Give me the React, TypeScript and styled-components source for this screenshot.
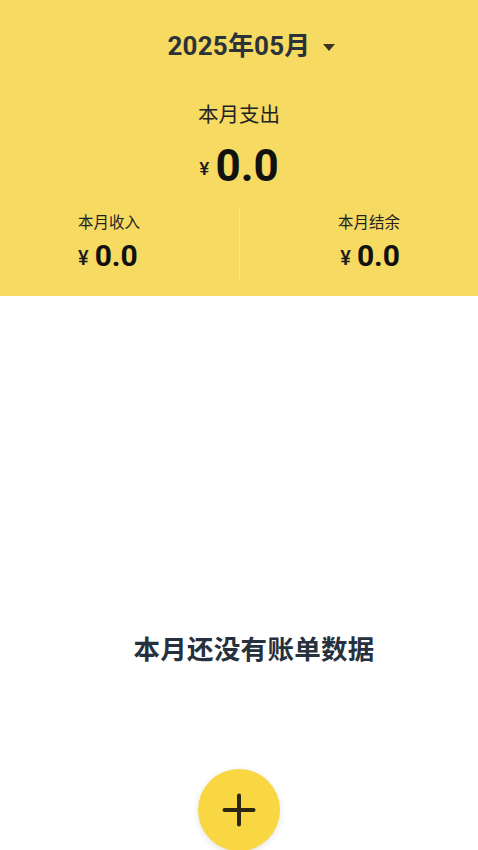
import React from 'react';
import styled, { createGlobalStyle } from 'styled-components';

const GlobalStyle = createGlobalStyle`
  html, body {
    margin: 0;
    padding: 0;
    background: #ffffff;
  }
  body {
    font-family: Roboto, 'Noto Sans CJK SC', sans-serif;
  }
`;

const Page = styled.div`
  width: 478px;
  height: 850px;
  overflow: hidden;
  display: flex;
  flex-direction: column;
  background: #ffffff;
`;

const Header = styled.header`
  background: #f6da62;
  padding: 28px 0 17px;
  display: flex;
  flex-direction: column;
  align-items: center;
`;

const MonthPicker = styled.div`
  position: relative;
  height: 36px;
  line-height: 36px;
  font-size: 26px;
  font-weight: 700;
  color: #2c3238;
  letter-spacing: 0.2px;
`;

const Caret = styled.span`
  position: absolute;
  left: calc(100% + 12px);
  top: 16px;
  width: 0;
  height: 0;
  border-left: 6px solid transparent;
  border-right: 6px solid transparent;
  border-top: 7px solid #3a3520;
`;

const SpendLabel = styled.div`
  margin-top: 38px;
  height: 26px;
  line-height: 26px;
  font-size: 20.5px;
  color: #222222;
`;

const Amount = styled.div<{ $size: number; $yen: number; $lift: number }>`
  display: flex;
  align-items: baseline;
  height: ${p => Math.round(p.$size * 1.25)}px;
  line-height: ${p => Math.round(p.$size * 1.25)}px;
  color: #111111;

  .yen {
    font-size: ${p => p.$yen}px;
    font-weight: 500;
    margin-right: ${p => Math.round(p.$yen * 0.3)}px;
    position: relative;
    top: -${p => p.$lift}px;
    color: #1c1c1c;
  }
  .value {
    font-size: ${p => p.$size}px;
    font-weight: 700;
  }
`;

const BigAmount = styled(Amount)`
  margin-top: 11px;
`;

const Summary = styled.div`
  align-self: stretch;
  margin-top: 15px;
  display: grid;
  grid-template-columns: 1fr 1px 1fr;
  padding: 0 78px;
`;

const Divider = styled.div`
  background: rgba(255, 255, 255, 0.35);
`;

const SummaryItem = styled.div<{ $align: 'flex-start' | 'flex-end' }>`
  display: flex;
  flex-direction: column;
  align-items: ${p => p.$align};
  padding: 4px 0;
`;

const SubLabel = styled.div`
  font-size: 15.5px;
  line-height: 20px;
  height: 20px;
  color: #222222;
  margin-bottom: 4px;
`;

const Body = styled.main`
  flex: 1;
  display: flex;
  flex-direction: column;
  align-items: center;
`;

const EmptyText = styled.div`
  margin: 334px 0 0 30px;
  font-size: 26.5px;
  font-weight: 700;
  line-height: 40px;
  color: #27313d;
  letter-spacing: 0.3px;
`;

const Fab = styled.button`
  margin-top: 99px;
  width: 82px;
  height: 82px;
  flex: none;
  border: none;
  border-radius: 50%;
  background: #f9d743;
  box-shadow: 0 2px 6px rgba(0, 0, 0, 0.12);
  display: flex;
  align-items: center;
  justify-content: center;
  padding: 0;
  cursor: pointer;
`;

const PlusIcon = () => (
  <svg width="36" height="36" viewBox="0 0 36 36">
    <path
      d="M18 3.5 V32.5 M3.5 18 H32.5"
      stroke="#2b2612"
      strokeWidth="4"
      strokeLinecap="round"
    />
  </svg>
);

const App: React.FC = () => {
  return (
    <>
      <GlobalStyle />
      <Page>
        <Header>
          <MonthPicker>
            2025年05月
            <Caret />
          </MonthPicker>
          <SpendLabel>本月支出</SpendLabel>
          <BigAmount $size={44} $yen={19} $lift={6}>
            <span className="yen">¥</span>
            <span className="value">0.0</span>
          </BigAmount>
          <Summary>
            <SummaryItem $align="flex-start">
              <SubLabel>本月收入</SubLabel>
              <Amount $size={30} $yen={20} $lift={1}>
                <span className="yen">¥</span>
                <span className="value">0.0</span>
              </Amount>
            </SummaryItem>
            <Divider />
            <SummaryItem $align="flex-end">
              <SubLabel>本月结余</SubLabel>
              <Amount $size={30} $yen={20} $lift={1}>
                <span className="yen">¥</span>
                <span className="value">0.0</span>
              </Amount>
            </SummaryItem>
          </Summary>
        </Header>
        <Body>
          <EmptyText>本月还没有账单数据</EmptyText>
          <Fab aria-label="add">
            <PlusIcon />
          </Fab>
        </Body>
      </Page>
    </>
  );
};

export default App;
